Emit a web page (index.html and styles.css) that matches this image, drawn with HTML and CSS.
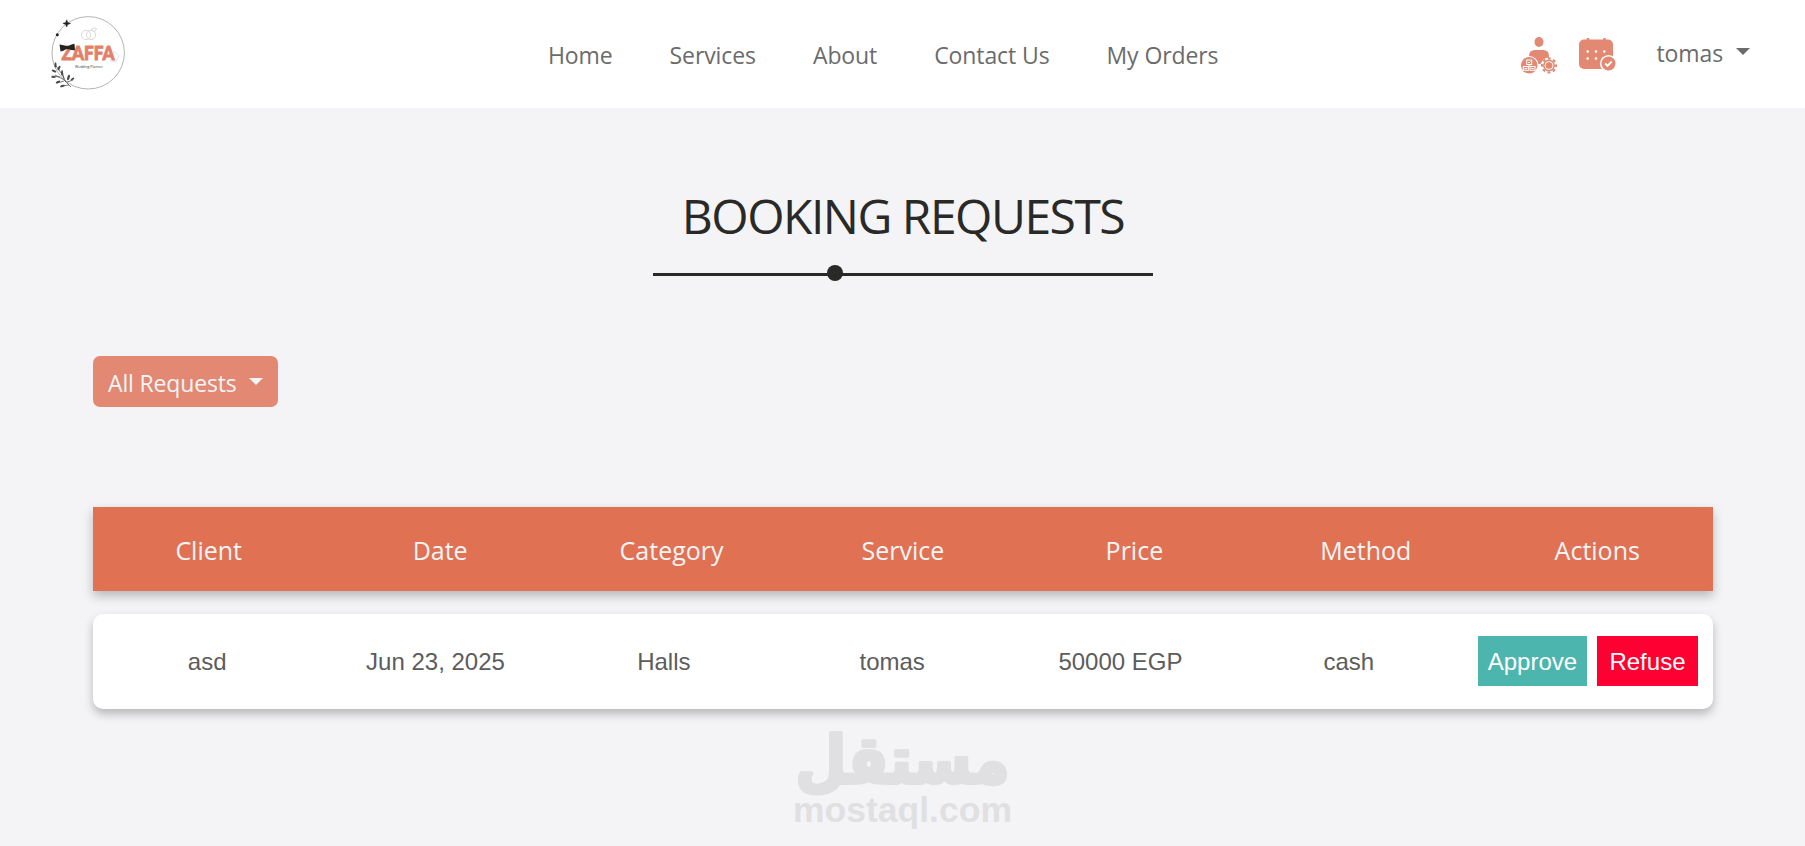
FILE: index.html
```html
<!DOCTYPE html>
<html lang="en">

<head>
    <meta charset="UTF-8">
    <meta name="viewport" content="width=device-width, initial-scale=1.0">
    <title>Booking Requests</title>
    <link rel="stylesheet" href="styles.css">
</head>

<body>
    <header class="navbar">
        <svg class="logo" viewBox="0 0 100 108" width="100" height="108">
            <circle cx="48.2" cy="52.8" r="36.2" fill="none" stroke="#b4b4b6" stroke-width="1" />
            <!-- stars -->
            <path d="M26.7 19.8l1 2.6 2.8 1-2.8 1-1 2.6-1-2.6-2.8-1 2.8-1z" fill="#222" stroke="#222" stroke-width=".5" />
            <circle cx="17.3" cy="34.7" r="1.5" fill="#222" />
            <!-- rings -->
            <g fill="none" stroke="#d9d9db" stroke-width="1">
                <circle cx="46" cy="35" r="4.6" />
                <circle cx="51" cy="35" r="4.6" />
                <path d="M51.5 29l2.5-1.3 2.7 1-2.4 3.3z" />
                <path d="M74 51l5 4.5-3 6.5-6-1z" stroke="#e4e4e6" />
            </g>
            <text x="21.5" y="60.300" class="logo-name" textLength="53" lengthAdjust="spacingAndGlyphs">ZAFFA</text>
            <!-- bow tie -->
            <path d="M19.500 44.500q3 .2 6 1.500h3q3-2 6-2.300l.5 6.500q-3 .6-6-1h-3q-2.500 2-5.500 2.300z" fill="#222" />
            <text x="35" y="67.500" class="logo-sub" textLength="28" lengthAdjust="spacingAndGlyphs">Wedding Planner</text>
            <!-- leaves -->
            <g fill="none" stroke="#444" stroke-width=".7">
                <path d="M31 87q-7-9-16-12M26 82q-4-9-10-16M20 77l-8-1M24 79l-2-9M27 82l6-2M24 81l-7 2M29 85l-8 1" />
            </g>
            <g fill="#4a4a4c">
                <ellipse cx="15.500" cy="65" rx="1.100" ry="2.800" />
                <ellipse cx="19" cy="68" rx="1.100" ry="2.500" transform="rotate(25 19 68)" />
                <ellipse cx="14" cy="71" rx="2.500" ry="1" transform="rotate(25 14 71)" />
                <ellipse cx="13.500" cy="77" rx="2.300" ry="1" />
                <ellipse cx="22" cy="73" rx="1" ry="2.600" />
                <ellipse cx="28.500" cy="77.500" rx="1.200" ry="2.800" transform="rotate(20 28.500 77.500)" />
                <ellipse cx="32.500" cy="79" rx="2" ry="1" transform="rotate(-30 32.500 79)" />
                <ellipse cx="18" cy="82" rx="2.500" ry="1" transform="rotate(-25 18 82)" />
                <ellipse cx="22.500" cy="86" rx="2.500" ry="1" transform="rotate(-15 22.500 86)" />
            </g>
        </svg>

        <nav class="nav-links">
            <a>Home</a>
            <a>Services</a>
            <a>About</a>
            <a>Contact Us</a>
            <a>My Orders</a>
        </nav>

        <div class="nav-icons">
            <svg viewBox="0 0 38 40" width="38" height="40">
                <ellipse cx="19" cy="7" rx="4.500" ry="5" fill="#e28873" />
                <path d="M9 21q0-6 6-6h8q6 0 6 6v3h-5l-3.500 5h-3l-4-5H9z" fill="#e28873" />
                <circle cx="9.200" cy="30.300" r="9.400" fill="#fff" />
                <circle cx="9.200" cy="30.300" r="8.300" fill="#e28873" />
                <g fill="none" stroke="#fff" stroke-width="1">
                    <rect x="6.700" y="25" width="5" height="4.500" />
                    <path d="M8 27l1 1 1.500-1.500M9.200 29.500v2" />
                    <rect x="3.300" y="31.500" width="5" height="3.800" />
                    <rect x="10" y="31.500" width="5" height="3.800" />
                    <path d="M4.500 33.500h2.500M11.200 33.500h2.500" />
                </g>
                <circle cx="29" cy="30.500" r="8" fill="#fff" />
                <circle cx="29" cy="30.500" r="5.900" fill="#e28873" />
                <circle cx="29" cy="30.500" r="7" fill="none" stroke="#e28873" stroke-width="2.200" stroke-dasharray="2.750" stroke-dashoffset="1.370" />
                <circle cx="29" cy="30.500" r="4" fill="none" stroke="#fff" stroke-width="1" />
            </svg>
            <svg viewBox="0 0 38 40" width="38" height="40">
                <path d="M9 3v4M25.500 3v4" stroke="#e28873" stroke-width="2.500" />
                <rect x="0" y="4.500" width="34" height="29.500" rx="5" fill="#e28873" />
                <g fill="#fff">
                    <circle cx="8.700" cy="16.500" r="1.300" />
                    <circle cx="17" cy="16.500" r="1.300" />
                    <circle cx="25.300" cy="16.500" r="1.300" />
                    <circle cx="8.700" cy="23.500" r="1.300" />
                    <circle cx="17" cy="23.500" r="1.300" />
                    <circle cx="25.300" cy="23.500" r="1.300" />
                </g>
                <circle cx="29.500" cy="28.500" r="8.600" fill="#fff" />
                <circle cx="29.500" cy="28.500" r="7" fill="#e28873" />
                <path d="M26.200 28.500l2.300 2.300 4.200-4.300" fill="none" stroke="#fff" stroke-width="1.900" />
            </svg>
        </div>

        <div class="user-menu">tomas <span class="caret"></span></div>
    </header>

    <main class="container">
        <div class="title">
            <h1>BOOKING REQUESTS</h1>
            <div class="title-line"><span class="title-dot"></span></div>
        </div>

        <button class="filter-btn">All Requests <span class="caret"></span></button>

        <div class="table-head">
            <span>Client</span>
            <span>Date</span>
            <span>Category</span>
            <span>Service</span>
            <span>Price</span>
            <span>Method</span>
            <span>Actions</span>
        </div>

        <div class="table-row">
            <span>asd</span>
            <span>Jun 23, 2025</span>
            <span>Halls</span>
            <span>tomas</span>
            <span>50000 EGP</span>
            <span>cash</span>
            <div class="actions">
                <button class="btn approve">Approve</button>
                <button class="btn refuse">Refuse</button>
            </div>
        </div>

        <svg class="watermark" viewBox="0 0 217 108" width="217" height="108">
            <text x="108.500" y="54" class="mark-ar" text-anchor="middle" textLength="214" lengthAdjust="spacingAndGlyphs">مستقل</text>
            <text x="-1" y="92.500" class="mark-en" textLength="219" lengthAdjust="spacingAndGlyphs">mostaql.com</text>
        </svg>
    </main>
</body>

</html>
```
FILE: styles.css
```css
* {
    box-sizing: border-box;
}

body {
    margin: 0;
    background-color: #f4f4f7;
    font-family: "Open Sans", "Noto Sans", sans-serif;
    color: #6b6b6b;
}

.navbar {
    display: flex;
    height: 108px;
    padding-left: 40px;
    padding-right: 55px;
    background-color: #ffffff;
}

.nav-links {
    display: flex;
    gap: 57px;
    margin-left: 408px;
    font-size: 23px;
    line-height: 110px;
    letter-spacing: -0.1px;
    white-space: nowrap;
}

.nav-icons {
    display: flex;
    gap: 21px;
    margin-left: auto;
    padding-top: 35px;
}

.user-menu {
    display: flex;
    align-items: center;
    height: 105px;
    margin-left: 39px;
    font-size: 23px;
    letter-spacing: -0.1px;
}

.caret {
    display: inline-block;
    margin-left: 13px;
    border-top: 7px solid currentColor;
    border-left: 7px solid transparent;
    border-right: 7px solid transparent;
}

.user-menu .caret {
    margin-bottom: 2px;
}

.container {
    margin: 0 92px 0 93px;
}

.title {
    display: flex;
    flex-direction: column;
    align-items: center;
    padding-top: 78px;
}

.title h1 {
    margin: 0;
    font-size: 48px;
    font-weight: 400;
    line-height: 60px;
    letter-spacing: -1.5px;
    color: #292928;
}

.title-line {
    position: relative;
    width: 500px;
    height: 3px;
    margin-top: 27px;
    background-color: #292928;
}

.title-dot {
    position: absolute;
    top: -8px;
    left: 174px;
    width: 16px;
    height: 16px;
    border-radius: 50%;
    background-color: #292928;
}

.filter-btn {
    display: flex;
    align-items: center;
    width: 185px;
    height: 51px;
    margin-top: 80px;
    padding: 3px 0 0 15px;
    border: none;
    border-radius: 7px;
    background-color: #e28873;
    font-family: inherit;
    font-size: 23px;
    letter-spacing: -0.15px;
    color: #f5f5f7;
    white-space: nowrap;
}

.filter-btn .caret {
    margin-left: 12px;
    margin-bottom: 3px;
}

.table-head,
.table-row {
    display: flex;
    align-items: center;
    text-align: center;
    box-shadow: 0 5px 10px rgba(0, 0, 0, 0.25);
}

.table-head span,
.table-row span {
    flex: 1;
}

.table-head {
    height: 84px;
    margin-top: 100px;
    padding-top: 1px;
    background-color: #e17153;
    font-size: 25px;
    color: #f5f5f7;
}

.table-row {
    height: 95px;
    margin-top: 23px;
    border-radius: 10px;
    background-color: #ffffff;
    font-family: "Liberation Sans", Arial, sans-serif;
    font-size: 24px;
    color: #5c5c5c;
}

.actions {
    display: flex;
    gap: 10px;
    padding: 0 15px 1px;
}

.btn {
    height: 50px;
    padding: 2px 0 0;
    border: none;
    font-family: inherit;
    font-size: 24px;
    color: #ffffff;
}

.approve {
    width: 109px;
    background-color: #4bb5ae;
}

.refuse {
    width: 101px;
    background-color: #ff0033;
}

.watermark {
    display: block;
    margin: 20px 0 0 701px;
    overflow: visible;
}

.logo-name {
    font: 900 18.500px "Lato", sans-serif;
    fill: #e37f68;
    stroke: #e37f68;
    stroke-width: 0.8;
}

.logo-sub {
    font: 400 4px "Open Sans", sans-serif;
    fill: #333333;
}

.mark-ar {
    font: 700 66px "DejaVu Sans", sans-serif;
    fill: #e0e0e2;
    stroke: #e0e0e2;
    stroke-width: 4;
    stroke-linejoin: round;
}

.mark-en {
    font: 700 35px "Liberation Sans", Arial, sans-serif;
    fill: #e0e0e2;
}
```
